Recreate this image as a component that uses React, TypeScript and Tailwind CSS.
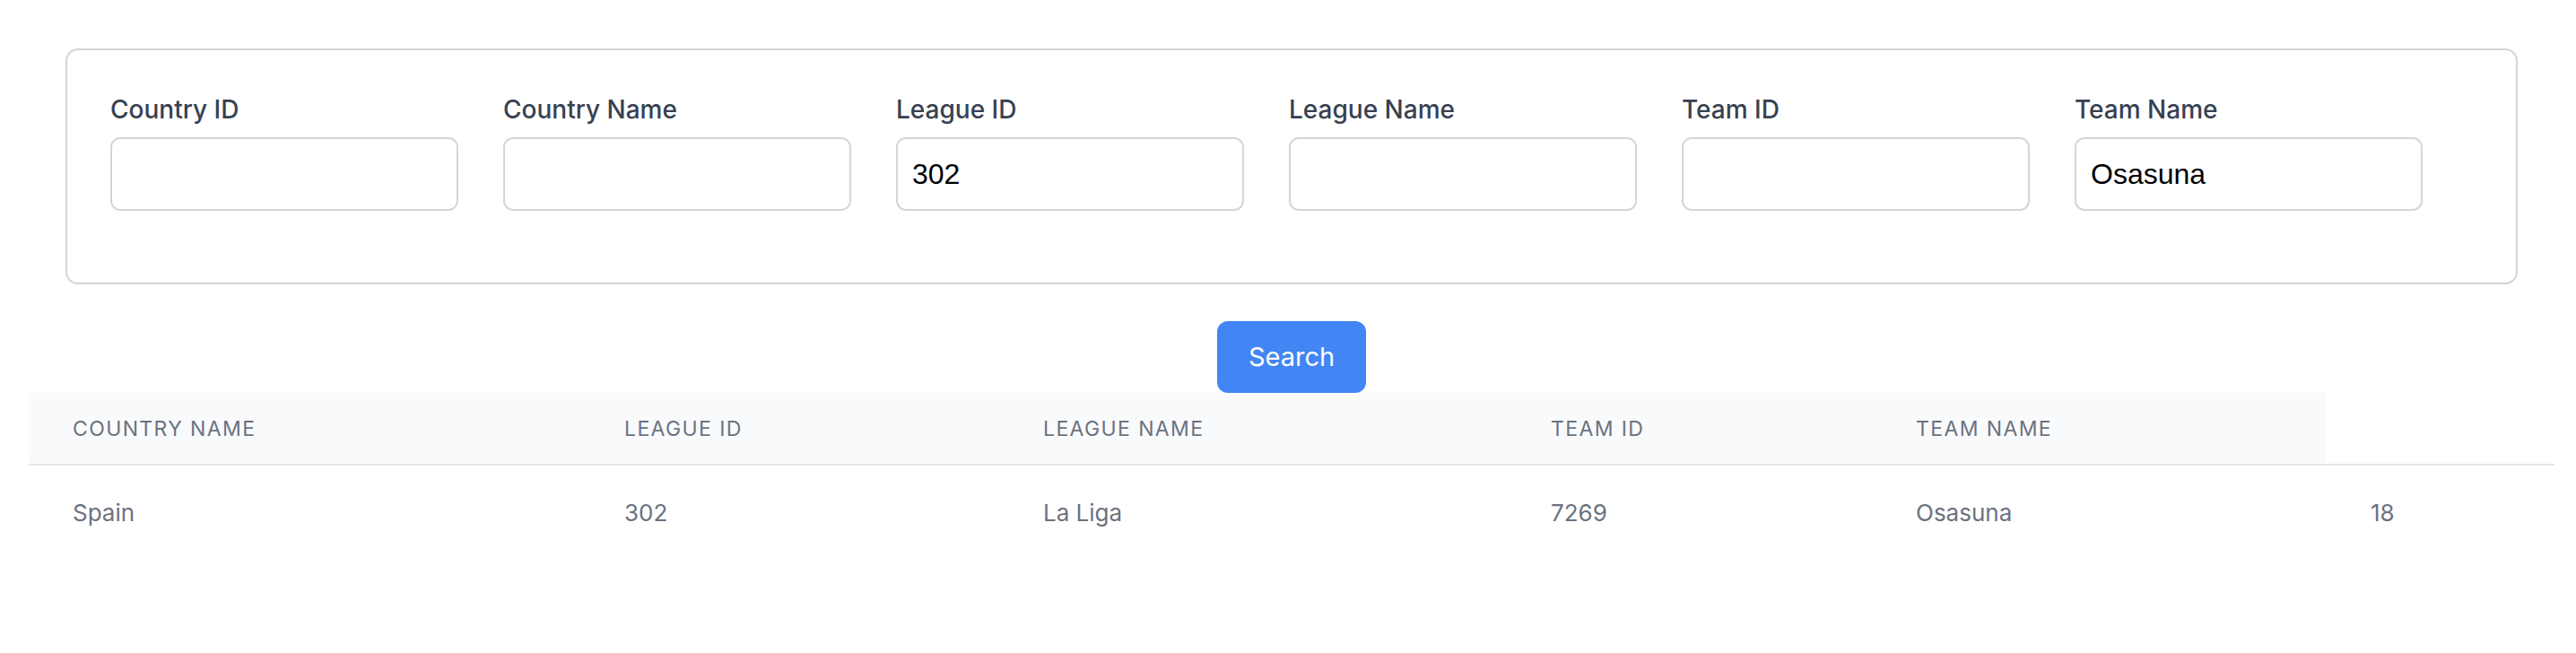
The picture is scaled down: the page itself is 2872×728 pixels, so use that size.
import React, { useState } from 'react';

const fields = [
  { key: 'countryId', label: 'Country ID' },
  { key: 'countryName', label: 'Country Name' },
  { key: 'leagueId', label: 'League ID' },
  { key: 'leagueName', label: 'League Name' },
  { key: 'teamId', label: 'Team ID' },
  { key: 'teamName', label: 'Team Name' },
];

const columns = [
  { label: 'Country Name', width: 'w-[615px]' },
  { label: 'League ID', width: 'w-[467px]' },
  { label: 'League Name', width: 'w-[566px]' },
  { label: 'Team ID', width: 'w-[407px]' },
  { label: 'Team Name', width: 'w-[507px]' },
];

const rows = [
  { countryName: 'Spain', leagueId: '302', leagueName: 'La Liga', teamId: '7269', teamName: 'Osasuna', extra: '18' },
];

export default function App() {
  const [values, setValues] = useState<Record<string, string>>({
    countryId: '',
    countryName: '',
    leagueId: '302',
    leagueName: '',
    teamId: '',
    teamName: 'Osasuna',
  });

  return (
    <div className="min-h-screen bg-white font-['Inter',sans-serif]">
      <div className="ml-[32px] w-[2816px] pt-[54px]">
        {/* Search form */}
        <div className="mx-[41px] rounded-[14px] border-2 border-[#d1d5db] pt-[46px] pb-[80px] pl-[48px]">
          <div className="flex gap-[50px]">
            {fields.map((f) => (
              <div key={f.key} className="w-[388px]">
                <label className="mb-[11px] block text-[28px] leading-[40px] font-medium text-[#374151]">
                  {f.label}
                </label>
                <input
                  type="text"
                  value={values[f.key]}
                  onChange={(e) => setValues({ ...values, [f.key]: e.target.value })}
                  className="block h-[82px] w-[388px] rounded-[11px] border-2 border-[#d4d6dc] px-[16px] font-['Liberation_Sans',Arial,sans-serif] text-[32px] text-black outline-none"
                />
              </div>
            ))}
          </div>
        </div>

        <div className="mt-[41px] flex justify-center">
          <button className="flex h-[80px] w-[166px] items-center justify-center rounded-[12px] bg-[#4285f4] text-[29px] text-white">
            Search
          </button>
        </div>

        {/* Results */}
        <table className="w-[2816px] table-fixed border-collapse text-left">
          <thead>
            <tr>
              {columns.map((c) => (
                <th
                  key={c.label}
                  className={`${c.width} border-b-2 border-[#e5e7eb] bg-[#f9fafb] px-[49px] pt-[26px] pb-[24px] text-[23px] leading-[29px] font-normal tracking-[0.06em] text-[#6b7280] uppercase`}
                >
                  {c.label}
                </th>
              ))}
              <th className="w-[254px] border-b-2 border-[#e5e7eb]"></th>
            </tr>
          </thead>
          <tbody>
            {rows.map((r) => (
              <tr key={r.teamId} className="text-[26px] leading-[38px] text-[#6b7280]">
                <td className="px-[49px] pt-[34px] pb-[36px]">{r.countryName}</td>
                <td className="px-[49px] pt-[34px] pb-[36px]">{r.leagueId}</td>
                <td className="px-[49px] pt-[34px] pb-[36px]">{r.leagueName}</td>
                <td className="px-[49px] pt-[34px] pb-[36px]">{r.teamId}</td>
                <td className="px-[49px] pt-[34px] pb-[36px]">{r.teamName}</td>
                <td className="px-[49px] pt-[34px] pb-[36px]">{r.extra}</td>
              </tr>
            ))}
          </tbody>
        </table>
      </div>
    </div>
  );
}
